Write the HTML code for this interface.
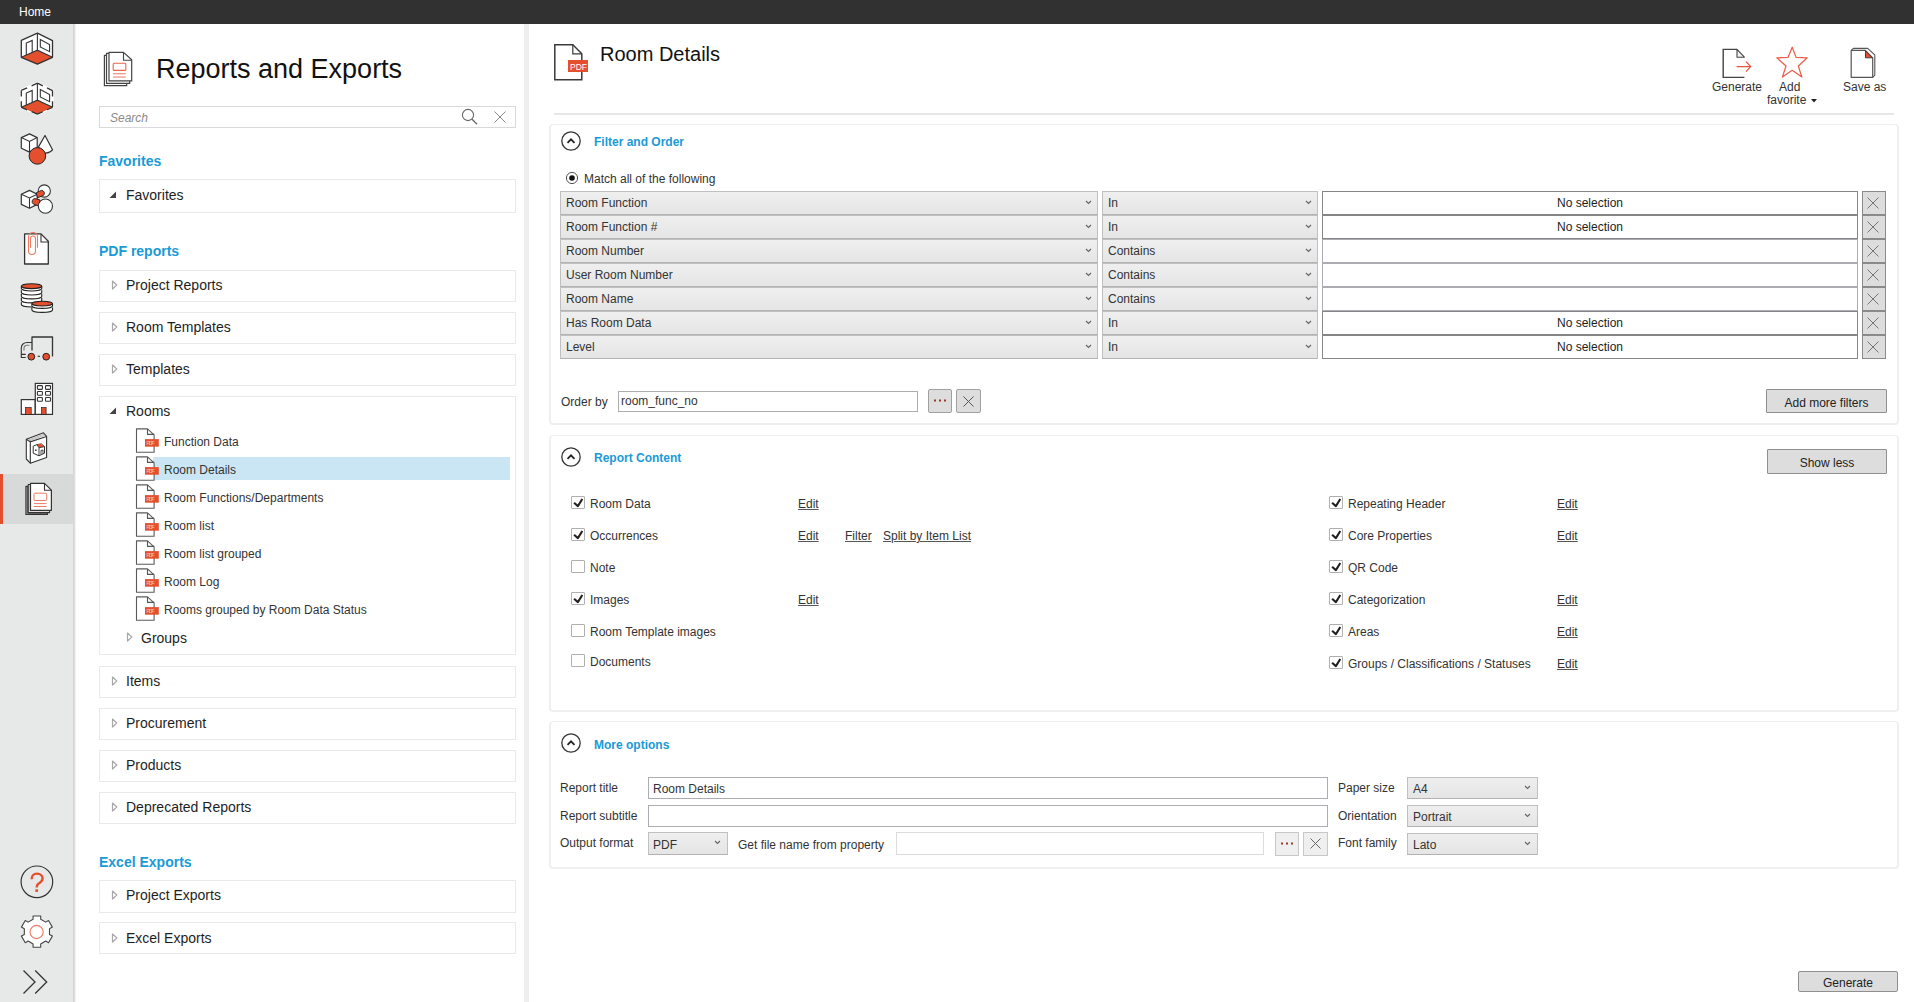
<!DOCTYPE html><html><head><meta charset="utf-8"><style>
*{box-sizing:border-box;margin:0;padding:0}
html,body{width:1914px;height:1002px;overflow:hidden;background:#fff;font-family:"Liberation Sans",sans-serif;color:#222}
.a{position:absolute}
.t{position:absolute;white-space:nowrap;line-height:1}
svg{position:absolute;overflow:visible}
.u{text-decoration:underline;text-underline-offset:1px;text-decoration-color:#555}
</style></head><body>
<div class="a" style="left:0px;top:0px;width:1914px;height:24px;background:#313131"></div>
<div class="t " style="left:19px;top:6px;font-size:12px;color:#fff">Home</div>
<div class="a" style="left:0px;top:24px;width:73px;height:978px;background:#e7e9e8"></div>
<div class="a" style="left:73px;top:24px;width:1px;height:978px;background:#d4d5d4"></div>
<div class="a" style="left:74px;top:24px;width:1px;height:978px;background:#dfe0df"></div>
<div class="a" style="left:75px;top:24px;width:1px;height:978px;background:#f0f1f0"></div>
<div class="a" style="left:0px;top:474px;width:73px;height:50px;background:#d8dada"></div>
<div class="a" style="left:0px;top:474px;width:3px;height:50px;background:#e4502d"></div>
<div class="a" style="left:524px;top:24px;width:5px;height:978px;background:#efefef"></div>
<svg style="left:98px;top:46px" width="40" height="46" viewBox="0 0 40 46">
<path d="M8.6 9.4 H6.4 V39.7 H28.7 V37.4" fill="#fff" stroke="#444" stroke-width="1.2" stroke-linejoin="round"/>
<path d="M11 7.4 H8.5 V37.4 H31.7 V34.9" fill="#fff" stroke="#444" stroke-width="1.2" stroke-linejoin="round"/>
<path d="M11 6.4 H25.5 L33.7 13.8 V34.9 H11 Z" fill="#fff" stroke="#444" stroke-width="1.2" stroke-linejoin="round"/>
<path d="M25.5 6.4 V14.2 H33.7" fill="none" stroke="#444" stroke-width="1.1"/>
<rect x="15.2" y="17.2" width="12.6" height="7.2" rx="1" fill="none" stroke="#e8654c" stroke-width="1.1"/>
<path d="M15.4 27.8 H27.4 M15.4 31 H27.4" stroke="#ea7a62" stroke-width="1.1" stroke-linecap="round"/>
</svg>
<div class="t " style="left:156px;top:56px;font-size:27px;color:#111">Reports and Exports</div>
<div class="a" style="left:99px;top:106px;width:417px;height:22px;border:1px solid #d9d9d9;background:#fff"></div>
<div class="t " style="left:110px;top:112px;font-size:12px;color:#8a8a8a;font-style:italic">Search</div>
<svg style="left:461px;top:109px" width="18" height="17" viewBox="0 0 18 17">
<circle cx="7" cy="6" r="5.6" fill="none" stroke="#666" stroke-width="1.1"/>
<path d="M10.8 10 L16 15.2" stroke="#666" stroke-width="1.3"/></svg>
<svg style="left:494px;top:111px" width="12" height="12" viewBox="0 0 12 12">
<path d="M0.5 0.5 L11.5 11.5 M11.5 0.5 L0.5 11.5" stroke="#888" stroke-width="1"/></svg>
<div class="t " style="left:99px;top:154px;font-size:14px;font-weight:bold;color:#1a9ad6">Favorites</div>
<div class="t " style="left:99px;top:244px;font-size:14px;font-weight:bold;color:#1a9ad6">PDF reports</div>
<div class="t " style="left:99px;top:855px;font-size:14px;font-weight:bold;color:#1a9ad6">Excel Exports</div>
<div class="a" style="left:99px;top:179px;width:417px;height:34px;border:1px solid #e9e9e9;background:#fff"></div>
<svg style="left:109px;top:191px" width="8" height="8" viewBox="0 0 8 8"><path d="M7 0.5 L7 7 L0.5 7 Z" fill="#444"/></svg>
<div class="t " style="left:126px;top:188px;font-size:14px;color:#1e1e1e">Favorites</div>
<div class="a" style="left:99px;top:270px;width:417px;height:32px;border:1px solid #e9e9e9;background:#fff"></div>
<svg style="left:111px;top:280px" width="7" height="10" viewBox="0 0 7 10"><path d="M1.5 1 L5.8 5 L1.5 9 Z" fill="#fff" stroke="#a8a8a8" stroke-width="1.2" stroke-linejoin="round"/></svg>
<div class="t " style="left:126px;top:278px;font-size:14px;color:#1e1e1e">Project Reports</div>
<div class="a" style="left:99px;top:312px;width:417px;height:32px;border:1px solid #e9e9e9;background:#fff"></div>
<svg style="left:111px;top:322px" width="7" height="10" viewBox="0 0 7 10"><path d="M1.5 1 L5.8 5 L1.5 9 Z" fill="#fff" stroke="#a8a8a8" stroke-width="1.2" stroke-linejoin="round"/></svg>
<div class="t " style="left:126px;top:320px;font-size:14px;color:#1e1e1e">Room Templates</div>
<div class="a" style="left:99px;top:354px;width:417px;height:32px;border:1px solid #e9e9e9;background:#fff"></div>
<svg style="left:111px;top:364px" width="7" height="10" viewBox="0 0 7 10"><path d="M1.5 1 L5.8 5 L1.5 9 Z" fill="#fff" stroke="#a8a8a8" stroke-width="1.2" stroke-linejoin="round"/></svg>
<div class="t " style="left:126px;top:362px;font-size:14px;color:#1e1e1e">Templates</div>
<div class="a" style="left:99px;top:396px;width:417px;height:259px;border:1px solid #e9e9e9;background:#fff"></div>
<svg style="left:109px;top:407px" width="8" height="8" viewBox="0 0 8 8"><path d="M7 0.5 L7 7 L0.5 7 Z" fill="#444"/></svg>
<div class="t " style="left:126px;top:404px;font-size:14px;color:#1e1e1e">Rooms</div>
<div class="a" style="left:99px;top:666px;width:417px;height:32px;border:1px solid #e9e9e9;background:#fff"></div>
<svg style="left:111px;top:676px" width="7" height="10" viewBox="0 0 7 10"><path d="M1.5 1 L5.8 5 L1.5 9 Z" fill="#fff" stroke="#a8a8a8" stroke-width="1.2" stroke-linejoin="round"/></svg>
<div class="t " style="left:126px;top:674px;font-size:14px;color:#1e1e1e">Items</div>
<div class="a" style="left:99px;top:708px;width:417px;height:32px;border:1px solid #e9e9e9;background:#fff"></div>
<svg style="left:111px;top:718px" width="7" height="10" viewBox="0 0 7 10"><path d="M1.5 1 L5.8 5 L1.5 9 Z" fill="#fff" stroke="#a8a8a8" stroke-width="1.2" stroke-linejoin="round"/></svg>
<div class="t " style="left:126px;top:716px;font-size:14px;color:#1e1e1e">Procurement</div>
<div class="a" style="left:99px;top:750px;width:417px;height:32px;border:1px solid #e9e9e9;background:#fff"></div>
<svg style="left:111px;top:760px" width="7" height="10" viewBox="0 0 7 10"><path d="M1.5 1 L5.8 5 L1.5 9 Z" fill="#fff" stroke="#a8a8a8" stroke-width="1.2" stroke-linejoin="round"/></svg>
<div class="t " style="left:126px;top:758px;font-size:14px;color:#1e1e1e">Products</div>
<div class="a" style="left:99px;top:792px;width:417px;height:32px;border:1px solid #e9e9e9;background:#fff"></div>
<svg style="left:111px;top:802px" width="7" height="10" viewBox="0 0 7 10"><path d="M1.5 1 L5.8 5 L1.5 9 Z" fill="#fff" stroke="#a8a8a8" stroke-width="1.2" stroke-linejoin="round"/></svg>
<div class="t " style="left:126px;top:800px;font-size:14px;color:#1e1e1e">Deprecated Reports</div>
<div class="a" style="left:99px;top:880px;width:417px;height:33px;border:1px solid #e9e9e9;background:#fff"></div>
<svg style="left:111px;top:890px" width="7" height="10" viewBox="0 0 7 10"><path d="M1.5 1 L5.8 5 L1.5 9 Z" fill="#fff" stroke="#a8a8a8" stroke-width="1.2" stroke-linejoin="round"/></svg>
<div class="t " style="left:126px;top:888px;font-size:14px;color:#1e1e1e">Project Exports</div>
<div class="a" style="left:99px;top:922px;width:417px;height:32px;border:1px solid #e9e9e9;background:#fff"></div>
<svg style="left:111px;top:933px" width="7" height="10" viewBox="0 0 7 10"><path d="M1.5 1 L5.8 5 L1.5 9 Z" fill="#fff" stroke="#a8a8a8" stroke-width="1.2" stroke-linejoin="round"/></svg>
<div class="t " style="left:126px;top:931px;font-size:14px;color:#1e1e1e">Excel Exports</div>
<div class="a" style="left:153px;top:457px;width:357px;height:23px;background:#cae6f4"></div>
<svg style="left:132px;top:425px" width="30" height="30" viewBox="0 0 30 30">
<path d="M4.5 3.9 H15.5 L22.1 9.9 V27.2 H4.5 Z" fill="#fff" stroke="#5a5a5a" stroke-width="1.1" stroke-linejoin="round"/>
<path d="M15.5 3.9 V9.4 H22.1" fill="none" stroke="#555" stroke-width="1.1"/>
<rect x="13" y="14.1" width="13.8" height="7.6" fill="#e4502d"/>
<text x="14.2" y="20.3" font-family="Liberation Sans" font-size="6.2" fill="#f7c0b0" textLength="8.5">PDF</text>
</svg>
<div class="t " style="left:164px;top:436px;font-size:12px;color:#333">Function Data</div>
<svg style="left:132px;top:453px" width="30" height="30" viewBox="0 0 30 30">
<path d="M4.5 3.9 H15.5 L22.1 9.9 V27.2 H4.5 Z" fill="#fff" stroke="#5a5a5a" stroke-width="1.1" stroke-linejoin="round"/>
<path d="M15.5 3.9 V9.4 H22.1" fill="none" stroke="#555" stroke-width="1.1"/>
<rect x="13" y="14.1" width="13.8" height="7.6" fill="#e4502d"/>
<text x="14.2" y="20.3" font-family="Liberation Sans" font-size="6.2" fill="#f7c0b0" textLength="8.5">PDF</text>
</svg>
<div class="t " style="left:164px;top:464px;font-size:12px;color:#333">Room Details</div>
<svg style="left:132px;top:481px" width="30" height="30" viewBox="0 0 30 30">
<path d="M4.5 3.9 H15.5 L22.1 9.9 V27.2 H4.5 Z" fill="#fff" stroke="#5a5a5a" stroke-width="1.1" stroke-linejoin="round"/>
<path d="M15.5 3.9 V9.4 H22.1" fill="none" stroke="#555" stroke-width="1.1"/>
<rect x="13" y="14.1" width="13.8" height="7.6" fill="#e4502d"/>
<text x="14.2" y="20.3" font-family="Liberation Sans" font-size="6.2" fill="#f7c0b0" textLength="8.5">PDF</text>
</svg>
<div class="t " style="left:164px;top:492px;font-size:12px;color:#333">Room Functions/Departments</div>
<svg style="left:132px;top:509px" width="30" height="30" viewBox="0 0 30 30">
<path d="M4.5 3.9 H15.5 L22.1 9.9 V27.2 H4.5 Z" fill="#fff" stroke="#5a5a5a" stroke-width="1.1" stroke-linejoin="round"/>
<path d="M15.5 3.9 V9.4 H22.1" fill="none" stroke="#555" stroke-width="1.1"/>
<rect x="13" y="14.1" width="13.8" height="7.6" fill="#e4502d"/>
<text x="14.2" y="20.3" font-family="Liberation Sans" font-size="6.2" fill="#f7c0b0" textLength="8.5">PDF</text>
</svg>
<div class="t " style="left:164px;top:520px;font-size:12px;color:#333">Room list</div>
<svg style="left:132px;top:537px" width="30" height="30" viewBox="0 0 30 30">
<path d="M4.5 3.9 H15.5 L22.1 9.9 V27.2 H4.5 Z" fill="#fff" stroke="#5a5a5a" stroke-width="1.1" stroke-linejoin="round"/>
<path d="M15.5 3.9 V9.4 H22.1" fill="none" stroke="#555" stroke-width="1.1"/>
<rect x="13" y="14.1" width="13.8" height="7.6" fill="#e4502d"/>
<text x="14.2" y="20.3" font-family="Liberation Sans" font-size="6.2" fill="#f7c0b0" textLength="8.5">PDF</text>
</svg>
<div class="t " style="left:164px;top:548px;font-size:12px;color:#333">Room list grouped</div>
<svg style="left:132px;top:565px" width="30" height="30" viewBox="0 0 30 30">
<path d="M4.5 3.9 H15.5 L22.1 9.9 V27.2 H4.5 Z" fill="#fff" stroke="#5a5a5a" stroke-width="1.1" stroke-linejoin="round"/>
<path d="M15.5 3.9 V9.4 H22.1" fill="none" stroke="#555" stroke-width="1.1"/>
<rect x="13" y="14.1" width="13.8" height="7.6" fill="#e4502d"/>
<text x="14.2" y="20.3" font-family="Liberation Sans" font-size="6.2" fill="#f7c0b0" textLength="8.5">PDF</text>
</svg>
<div class="t " style="left:164px;top:576px;font-size:12px;color:#333">Room Log</div>
<svg style="left:132px;top:593px" width="30" height="30" viewBox="0 0 30 30">
<path d="M4.5 3.9 H15.5 L22.1 9.9 V27.2 H4.5 Z" fill="#fff" stroke="#5a5a5a" stroke-width="1.1" stroke-linejoin="round"/>
<path d="M15.5 3.9 V9.4 H22.1" fill="none" stroke="#555" stroke-width="1.1"/>
<rect x="13" y="14.1" width="13.8" height="7.6" fill="#e4502d"/>
<text x="14.2" y="20.3" font-family="Liberation Sans" font-size="6.2" fill="#f7c0b0" textLength="8.5">PDF</text>
</svg>
<div class="t " style="left:164px;top:604px;font-size:12px;color:#333">Rooms grouped by Room Data Status</div>
<svg style="left:126px;top:632px" width="7" height="10" viewBox="0 0 7 10"><path d="M1.5 1 L5.8 5 L1.5 9 Z" fill="#fff" stroke="#a8a8a8" stroke-width="1.2" stroke-linejoin="round"/></svg>
<div class="t " style="left:141px;top:631px;font-size:14px;color:#1e1e1e">Groups</div>
<svg style="left:553px;top:43px" width="38" height="40" viewBox="0 0 38 40">
<path d="M1.8 1.8 h18 l9 9 v26 h-27 z" fill="#fff" stroke="#3a3a3a" stroke-width="1.5"/>
<path d="M19.8 1.8 v9 h9" fill="none" stroke="#3a3a3a" stroke-width="1.2"/>
<rect x="15" y="17" width="20" height="12" fill="#e4502d"/>
<text x="17" y="26.5" font-family="Liberation Sans" font-size="8.5" fill="#fff">PDF</text>
</svg>
<div class="t " style="left:600px;top:44px;font-size:20px;color:#111">Room Details</div>
<div class="a" style="left:554px;top:113px;width:1340px;height:2px;background:#e6e6e6"></div>
<svg style="left:1722px;top:48px" width="32" height="32" viewBox="0 0 32 32">
<path d="M15 1.4 L22.4 9.2 H15 Z" fill="#f2f2f2" stroke="#444" stroke-width="1.1" stroke-linejoin="round"/>
<path d="M22.4 29.4 H1.2 V1.4 H15" fill="none" stroke="#444" stroke-width="1.4"/>
<path d="M14.6 18.6 H28.5 M24 13.6 L28.7 18.6 L24 23.6" fill="none" stroke="#e8553e" stroke-width="1.2"/>
</svg>
<svg style="left:1770px;top:42px" width="44" height="40" viewBox="0 0 44 40">
<path d="M22.2 5.2 L26.1 15.4 L37.3 15.8 L28.3 24 L31.9 35.1 L22.2 28.3 L12.4 35.1 L16 24 L6.8 15.8 L18 15.4 Z" fill="none" stroke="#e8604a" stroke-width="1.25" stroke-linejoin="round"/>
</svg>
<svg style="left:1845px;top:42px" width="36" height="40" viewBox="0 0 36 40">
<path d="M6.2 8.4 L8.4 6.4 H22.6 L29.8 12.8 V33.2 L27.7 35.3" fill="#fff" stroke="#555" stroke-width="1.1" stroke-linejoin="round"/>
<path d="M6.2 8.4 H20.4 L27.7 15.8 V35.3 H6.2 Z" fill="#fff" stroke="#555" stroke-width="1.2" stroke-linejoin="round"/>
<path d="M20.5 8.8 V15.8 H27.3 Z" fill="#e4502d" stroke="#333" stroke-width="0.9" stroke-linejoin="round"/>
</svg>
<div class="t " style="left:1712px;top:81px;font-size:12px;color:#333">Generate</div>
<div class="t " style="left:1779px;top:81px;font-size:12px;color:#333">Add</div>
<div class="t " style="left:1767px;top:94px;font-size:12px;color:#333">favorite</div>
<svg style="left:1811px;top:99px" width="6" height="4" viewBox="0 0 6 4"><path d="M0 0 H6 L3 3.5 Z" fill="#222"/></svg>
<div class="t " style="left:1843px;top:81px;font-size:12px;color:#333">Save as</div>
<div class="a" style="left:549px;top:124px;width:1350px;height:301px;border:2px solid #eef0ef;border-top-width:1px;border-radius:4px;background:#fff"></div>
<svg style="left:559.5px;top:129.5px" width="22" height="22" viewBox="0 0 22 22">
<circle cx="11" cy="11" r="9.2" fill="none" stroke="#333" stroke-width="1.3"/>
<path d="M7.5 12.8 L11 9.3 L14.5 12.8" fill="none" stroke="#222" stroke-width="1.8"/></svg>
<div class="t " style="left:594px;top:136px;font-size:12px;font-weight:bold;color:#1a9ad6">Filter and Order</div>
<svg style="left:565px;top:171px" width="14" height="14" viewBox="0 0 14 14">
<circle cx="7" cy="7" r="5.6" fill="#fff" stroke="#555" stroke-width="1"/><circle cx="7" cy="7" r="2.8" fill="#111"/></svg>
<div class="t " style="left:584px;top:173px;font-size:12px;color:#333">Match all of the following</div>
<div class="a" style="left:560px;top:191px;width:538px;height:24px;border:1px solid #c0c0c0;border-bottom-color:#b3b3b3;background:linear-gradient(#efefef,#e5e5e5)"></div>
<div class="t " style="left:566px;top:197px;font-size:12px;color:#333">Room Function</div>
<svg style="left:1085px;top:200px" width="7" height="5" viewBox="0 0 7 5"><path d="M1 1 L3.5 3.5 L6 1" fill="none" stroke="#666" stroke-width="1.15"/></svg>
<div class="a" style="left:1102px;top:191px;width:216px;height:24px;border:1px solid #c0c0c0;border-bottom-color:#b3b3b3;background:linear-gradient(#efefef,#e5e5e5)"></div>
<div class="t " style="left:1108px;top:197px;font-size:12px;color:#333">In</div>
<svg style="left:1305px;top:200px" width="7" height="5" viewBox="0 0 7 5"><path d="M1 1 L3.5 3.5 L6 1" fill="none" stroke="#666" stroke-width="1.15"/></svg>
<div class="a" style="left:1322px;top:191px;width:536px;height:24px;border:1px solid #858585;background:#fff"></div>
<div class="t" style="left:1322px;width:536px;text-align:center;top:197px;font-size:12px;color:#222">No selection</div>
<div class="a" style="left:1862px;top:191px;width:24px;height:24px;border:1px solid #8a8a8a;background:#dddddd"></div>
<svg style="left:1867px;top:197px" width="12" height="12" viewBox="0 0 12 12"><path d="M0.5 0.5 L11.5 11.5 M11.5 0.5 L0.5 11.5" stroke="#777" stroke-width="1.0"/></svg>
<div class="a" style="left:560px;top:215px;width:538px;height:24px;border:1px solid #c0c0c0;border-bottom-color:#b3b3b3;background:linear-gradient(#efefef,#e5e5e5)"></div>
<div class="t " style="left:566px;top:221px;font-size:12px;color:#333">Room Function #</div>
<svg style="left:1085px;top:224px" width="7" height="5" viewBox="0 0 7 5"><path d="M1 1 L3.5 3.5 L6 1" fill="none" stroke="#666" stroke-width="1.15"/></svg>
<div class="a" style="left:1102px;top:215px;width:216px;height:24px;border:1px solid #c0c0c0;border-bottom-color:#b3b3b3;background:linear-gradient(#efefef,#e5e5e5)"></div>
<div class="t " style="left:1108px;top:221px;font-size:12px;color:#333">In</div>
<svg style="left:1305px;top:224px" width="7" height="5" viewBox="0 0 7 5"><path d="M1 1 L3.5 3.5 L6 1" fill="none" stroke="#666" stroke-width="1.15"/></svg>
<div class="a" style="left:1322px;top:215px;width:536px;height:24px;border:1px solid #858585;background:#fff"></div>
<div class="t" style="left:1322px;width:536px;text-align:center;top:221px;font-size:12px;color:#222">No selection</div>
<div class="a" style="left:1862px;top:215px;width:24px;height:24px;border:1px solid #8a8a8a;background:#dddddd"></div>
<svg style="left:1867px;top:221px" width="12" height="12" viewBox="0 0 12 12"><path d="M0.5 0.5 L11.5 11.5 M11.5 0.5 L0.5 11.5" stroke="#777" stroke-width="1.0"/></svg>
<div class="a" style="left:560px;top:239px;width:538px;height:24px;border:1px solid #c0c0c0;border-bottom-color:#b3b3b3;background:linear-gradient(#efefef,#e5e5e5)"></div>
<div class="t " style="left:566px;top:245px;font-size:12px;color:#333">Room Number</div>
<svg style="left:1085px;top:248px" width="7" height="5" viewBox="0 0 7 5"><path d="M1 1 L3.5 3.5 L6 1" fill="none" stroke="#666" stroke-width="1.15"/></svg>
<div class="a" style="left:1102px;top:239px;width:216px;height:24px;border:1px solid #c0c0c0;border-bottom-color:#b3b3b3;background:linear-gradient(#efefef,#e5e5e5)"></div>
<div class="t " style="left:1108px;top:245px;font-size:12px;color:#333">Contains</div>
<svg style="left:1305px;top:248px" width="7" height="5" viewBox="0 0 7 5"><path d="M1 1 L3.5 3.5 L6 1" fill="none" stroke="#666" stroke-width="1.15"/></svg>
<div class="a" style="left:1322px;top:239px;width:536px;height:24px;border:1px solid #abadb3;background:#fff"></div>
<div class="a" style="left:1862px;top:239px;width:24px;height:24px;border:1px solid #8a8a8a;background:#dddddd"></div>
<svg style="left:1867px;top:245px" width="12" height="12" viewBox="0 0 12 12"><path d="M0.5 0.5 L11.5 11.5 M11.5 0.5 L0.5 11.5" stroke="#777" stroke-width="1.0"/></svg>
<div class="a" style="left:560px;top:263px;width:538px;height:24px;border:1px solid #c0c0c0;border-bottom-color:#b3b3b3;background:linear-gradient(#efefef,#e5e5e5)"></div>
<div class="t " style="left:566px;top:269px;font-size:12px;color:#333">User Room Number</div>
<svg style="left:1085px;top:272px" width="7" height="5" viewBox="0 0 7 5"><path d="M1 1 L3.5 3.5 L6 1" fill="none" stroke="#666" stroke-width="1.15"/></svg>
<div class="a" style="left:1102px;top:263px;width:216px;height:24px;border:1px solid #c0c0c0;border-bottom-color:#b3b3b3;background:linear-gradient(#efefef,#e5e5e5)"></div>
<div class="t " style="left:1108px;top:269px;font-size:12px;color:#333">Contains</div>
<svg style="left:1305px;top:272px" width="7" height="5" viewBox="0 0 7 5"><path d="M1 1 L3.5 3.5 L6 1" fill="none" stroke="#666" stroke-width="1.15"/></svg>
<div class="a" style="left:1322px;top:263px;width:536px;height:24px;border:1px solid #abadb3;background:#fff"></div>
<div class="a" style="left:1862px;top:263px;width:24px;height:24px;border:1px solid #8a8a8a;background:#dddddd"></div>
<svg style="left:1867px;top:269px" width="12" height="12" viewBox="0 0 12 12"><path d="M0.5 0.5 L11.5 11.5 M11.5 0.5 L0.5 11.5" stroke="#777" stroke-width="1.0"/></svg>
<div class="a" style="left:560px;top:287px;width:538px;height:24px;border:1px solid #c0c0c0;border-bottom-color:#b3b3b3;background:linear-gradient(#efefef,#e5e5e5)"></div>
<div class="t " style="left:566px;top:293px;font-size:12px;color:#333">Room Name</div>
<svg style="left:1085px;top:296px" width="7" height="5" viewBox="0 0 7 5"><path d="M1 1 L3.5 3.5 L6 1" fill="none" stroke="#666" stroke-width="1.15"/></svg>
<div class="a" style="left:1102px;top:287px;width:216px;height:24px;border:1px solid #c0c0c0;border-bottom-color:#b3b3b3;background:linear-gradient(#efefef,#e5e5e5)"></div>
<div class="t " style="left:1108px;top:293px;font-size:12px;color:#333">Contains</div>
<svg style="left:1305px;top:296px" width="7" height="5" viewBox="0 0 7 5"><path d="M1 1 L3.5 3.5 L6 1" fill="none" stroke="#666" stroke-width="1.15"/></svg>
<div class="a" style="left:1322px;top:287px;width:536px;height:24px;border:1px solid #abadb3;background:#fff"></div>
<div class="a" style="left:1862px;top:287px;width:24px;height:24px;border:1px solid #8a8a8a;background:#dddddd"></div>
<svg style="left:1867px;top:293px" width="12" height="12" viewBox="0 0 12 12"><path d="M0.5 0.5 L11.5 11.5 M11.5 0.5 L0.5 11.5" stroke="#777" stroke-width="1.0"/></svg>
<div class="a" style="left:560px;top:311px;width:538px;height:24px;border:1px solid #c0c0c0;border-bottom-color:#b3b3b3;background:linear-gradient(#efefef,#e5e5e5)"></div>
<div class="t " style="left:566px;top:317px;font-size:12px;color:#333">Has Room Data</div>
<svg style="left:1085px;top:320px" width="7" height="5" viewBox="0 0 7 5"><path d="M1 1 L3.5 3.5 L6 1" fill="none" stroke="#666" stroke-width="1.15"/></svg>
<div class="a" style="left:1102px;top:311px;width:216px;height:24px;border:1px solid #c0c0c0;border-bottom-color:#b3b3b3;background:linear-gradient(#efefef,#e5e5e5)"></div>
<div class="t " style="left:1108px;top:317px;font-size:12px;color:#333">In</div>
<svg style="left:1305px;top:320px" width="7" height="5" viewBox="0 0 7 5"><path d="M1 1 L3.5 3.5 L6 1" fill="none" stroke="#666" stroke-width="1.15"/></svg>
<div class="a" style="left:1322px;top:311px;width:536px;height:24px;border:1px solid #858585;background:#fff"></div>
<div class="t" style="left:1322px;width:536px;text-align:center;top:317px;font-size:12px;color:#222">No selection</div>
<div class="a" style="left:1862px;top:311px;width:24px;height:24px;border:1px solid #8a8a8a;background:#dddddd"></div>
<svg style="left:1867px;top:317px" width="12" height="12" viewBox="0 0 12 12"><path d="M0.5 0.5 L11.5 11.5 M11.5 0.5 L0.5 11.5" stroke="#777" stroke-width="1.0"/></svg>
<div class="a" style="left:560px;top:335px;width:538px;height:24px;border:1px solid #c0c0c0;border-bottom-color:#b3b3b3;background:linear-gradient(#efefef,#e5e5e5)"></div>
<div class="t " style="left:566px;top:341px;font-size:12px;color:#333">Level</div>
<svg style="left:1085px;top:344px" width="7" height="5" viewBox="0 0 7 5"><path d="M1 1 L3.5 3.5 L6 1" fill="none" stroke="#666" stroke-width="1.15"/></svg>
<div class="a" style="left:1102px;top:335px;width:216px;height:24px;border:1px solid #c0c0c0;border-bottom-color:#b3b3b3;background:linear-gradient(#efefef,#e5e5e5)"></div>
<div class="t " style="left:1108px;top:341px;font-size:12px;color:#333">In</div>
<svg style="left:1305px;top:344px" width="7" height="5" viewBox="0 0 7 5"><path d="M1 1 L3.5 3.5 L6 1" fill="none" stroke="#666" stroke-width="1.15"/></svg>
<div class="a" style="left:1322px;top:335px;width:536px;height:24px;border:1px solid #858585;background:#fff"></div>
<div class="t" style="left:1322px;width:536px;text-align:center;top:341px;font-size:12px;color:#222">No selection</div>
<div class="a" style="left:1862px;top:335px;width:24px;height:24px;border:1px solid #8a8a8a;background:#dddddd"></div>
<svg style="left:1867px;top:341px" width="12" height="12" viewBox="0 0 12 12"><path d="M0.5 0.5 L11.5 11.5 M11.5 0.5 L0.5 11.5" stroke="#777" stroke-width="1.0"/></svg>
<div class="t " style="left:561px;top:396px;font-size:12px;color:#333">Order by</div>
<div class="a" style="left:618px;top:391px;width:300px;height:21px;border:1px solid #abadb3;background:#fff"></div>
<div class="t " style="left:621px;top:395px;font-size:12px;color:#333">room_func_no</div>
<div class="a" style="left:928px;top:389px;width:24px;height:24px;border:1px solid #a0a0a0;border-radius:2px;background:#dddddd"></div>
<svg style="left:932px;top:399px" width="16" height="4" viewBox="0 0 16 4"><rect x="2" y="0.5" width="2" height="2" fill="#9a3b28"/><rect x="7" y="0.5" width="2" height="2" fill="#9a3b28"/><rect x="12" y="0.5" width="2" height="2" fill="#9a3b28"/></svg>
<div class="a" style="left:956px;top:389px;width:25px;height:24px;border:1px solid #a0a0a0;border-radius:2px;background:#dddddd"></div>
<svg style="left:963px;top:396px" width="11" height="11" viewBox="0 0 11 11"><path d="M0.5 0.5 L10.5 10.5 M10.5 0.5 L0.5 10.5" stroke="#555" stroke-width="1.0"/></svg>
<div class="a" style="left:1766px;top:389px;width:121px;height:24px;border:1px solid #8f8f8f;border-radius:1px;background:#dddddd"></div>
<div class="t" style="left:1766px;width:121px;text-align:center;top:397px;font-size:12px;color:#222">Add more filters</div>
<div class="a" style="left:549px;top:435px;width:1350px;height:277px;border:2px solid #eef0ef;border-top-width:1px;border-radius:4px;background:#fff"></div>
<svg style="left:559.5px;top:445.5px" width="22" height="22" viewBox="0 0 22 22">
<circle cx="11" cy="11" r="9.2" fill="none" stroke="#333" stroke-width="1.3"/>
<path d="M7.5 12.8 L11 9.3 L14.5 12.8" fill="none" stroke="#222" stroke-width="1.8"/></svg>
<div class="t " style="left:594px;top:452px;font-size:12px;font-weight:bold;color:#1a9ad6">Report Content</div>
<div class="a" style="left:1767px;top:449px;width:120px;height:25px;border:1px solid #8f8f8f;border-radius:1px;background:#dddddd"></div>
<div class="t" style="left:1767px;width:120px;text-align:center;top:457px;font-size:12px;color:#222">Show less</div>
<div class="a" style="left:571px;top:496px;width:14px;height:13px;border:1px solid #b0b0b0;border-radius:1px;background:#fff"></div>
<svg style="left:571px;top:496px" width="14" height="14" viewBox="0 0 14 14"><path d="M3.1 6.8 L6.9 10.1 L11.3 3" fill="none" stroke="#222" stroke-width="2.1" stroke-linejoin="round"/></svg>
<div class="t " style="left:590px;top:498px;font-size:12px;color:#333">Room Data</div>
<div class="t u" style="left:798px;top:498px;font-size:12px;color:#333">Edit</div>
<div class="a" style="left:571px;top:528px;width:14px;height:13px;border:1px solid #b0b0b0;border-radius:1px;background:#fff"></div>
<svg style="left:571px;top:528px" width="14" height="14" viewBox="0 0 14 14"><path d="M3.1 6.8 L6.9 10.1 L11.3 3" fill="none" stroke="#222" stroke-width="2.1" stroke-linejoin="round"/></svg>
<div class="t " style="left:590px;top:530px;font-size:12px;color:#333">Occurrences</div>
<div class="t u" style="left:798px;top:530px;font-size:12px;color:#333">Edit</div>
<div class="t u" style="left:845px;top:530px;font-size:12px;color:#333">Filter</div>
<div class="t u" style="left:883px;top:530px;font-size:12px;color:#333">Split by Item List</div>
<div class="a" style="left:571px;top:560px;width:14px;height:13px;border:1px solid #b0b0b0;border-radius:1px;background:#fff"></div>
<div class="t " style="left:590px;top:562px;font-size:12px;color:#333">Note</div>
<div class="a" style="left:571px;top:592px;width:14px;height:13px;border:1px solid #b0b0b0;border-radius:1px;background:#fff"></div>
<svg style="left:571px;top:592px" width="14" height="14" viewBox="0 0 14 14"><path d="M3.1 6.8 L6.9 10.1 L11.3 3" fill="none" stroke="#222" stroke-width="2.1" stroke-linejoin="round"/></svg>
<div class="t " style="left:590px;top:594px;font-size:12px;color:#333">Images</div>
<div class="t u" style="left:798px;top:594px;font-size:12px;color:#333">Edit</div>
<div class="a" style="left:571px;top:624px;width:14px;height:13px;border:1px solid #b0b0b0;border-radius:1px;background:#fff"></div>
<div class="t " style="left:590px;top:626px;font-size:12px;color:#333">Room Template images</div>
<div class="a" style="left:571px;top:654px;width:14px;height:13px;border:1px solid #b0b0b0;border-radius:1px;background:#fff"></div>
<div class="t " style="left:590px;top:656px;font-size:12px;color:#333">Documents</div>
<div class="a" style="left:1329px;top:496px;width:14px;height:13px;border:1px solid #b0b0b0;border-radius:1px;background:#fff"></div>
<svg style="left:1329px;top:496px" width="14" height="14" viewBox="0 0 14 14"><path d="M3.1 6.8 L6.9 10.1 L11.3 3" fill="none" stroke="#222" stroke-width="2.1" stroke-linejoin="round"/></svg>
<div class="t " style="left:1348px;top:498px;font-size:12px;color:#333">Repeating Header</div>
<div class="t u" style="left:1557px;top:498px;font-size:12px;color:#333">Edit</div>
<div class="a" style="left:1329px;top:528px;width:14px;height:13px;border:1px solid #b0b0b0;border-radius:1px;background:#fff"></div>
<svg style="left:1329px;top:528px" width="14" height="14" viewBox="0 0 14 14"><path d="M3.1 6.8 L6.9 10.1 L11.3 3" fill="none" stroke="#222" stroke-width="2.1" stroke-linejoin="round"/></svg>
<div class="t " style="left:1348px;top:530px;font-size:12px;color:#333">Core Properties</div>
<div class="t u" style="left:1557px;top:530px;font-size:12px;color:#333">Edit</div>
<div class="a" style="left:1329px;top:560px;width:14px;height:13px;border:1px solid #b0b0b0;border-radius:1px;background:#fff"></div>
<svg style="left:1329px;top:560px" width="14" height="14" viewBox="0 0 14 14"><path d="M3.1 6.8 L6.9 10.1 L11.3 3" fill="none" stroke="#222" stroke-width="2.1" stroke-linejoin="round"/></svg>
<div class="t " style="left:1348px;top:562px;font-size:12px;color:#333">QR Code</div>
<div class="a" style="left:1329px;top:592px;width:14px;height:13px;border:1px solid #b0b0b0;border-radius:1px;background:#fff"></div>
<svg style="left:1329px;top:592px" width="14" height="14" viewBox="0 0 14 14"><path d="M3.1 6.8 L6.9 10.1 L11.3 3" fill="none" stroke="#222" stroke-width="2.1" stroke-linejoin="round"/></svg>
<div class="t " style="left:1348px;top:594px;font-size:12px;color:#333">Categorization</div>
<div class="t u" style="left:1557px;top:594px;font-size:12px;color:#333">Edit</div>
<div class="a" style="left:1329px;top:624px;width:14px;height:13px;border:1px solid #b0b0b0;border-radius:1px;background:#fff"></div>
<svg style="left:1329px;top:624px" width="14" height="14" viewBox="0 0 14 14"><path d="M3.1 6.8 L6.9 10.1 L11.3 3" fill="none" stroke="#222" stroke-width="2.1" stroke-linejoin="round"/></svg>
<div class="t " style="left:1348px;top:626px;font-size:12px;color:#333">Areas</div>
<div class="t u" style="left:1557px;top:626px;font-size:12px;color:#333">Edit</div>
<div class="a" style="left:1329px;top:656px;width:14px;height:13px;border:1px solid #b0b0b0;border-radius:1px;background:#fff"></div>
<svg style="left:1329px;top:656px" width="14" height="14" viewBox="0 0 14 14"><path d="M3.1 6.8 L6.9 10.1 L11.3 3" fill="none" stroke="#222" stroke-width="2.1" stroke-linejoin="round"/></svg>
<div class="t " style="left:1348px;top:658px;font-size:12px;color:#333">Groups / Classifications / Statuses</div>
<div class="t u" style="left:1557px;top:658px;font-size:12px;color:#333">Edit</div>
<div class="a" style="left:549px;top:721px;width:1350px;height:148px;border:2px solid #eef0ef;border-top-width:1px;border-radius:4px;background:#fff"></div>
<svg style="left:559.5px;top:732px" width="22" height="22" viewBox="0 0 22 22">
<circle cx="11" cy="11" r="9.2" fill="none" stroke="#333" stroke-width="1.3"/>
<path d="M7.5 12.8 L11 9.3 L14.5 12.8" fill="none" stroke="#222" stroke-width="1.8"/></svg>
<div class="t " style="left:594px;top:739px;font-size:12px;font-weight:bold;color:#1a9ad6">More options</div>
<div class="t " style="left:560px;top:782px;font-size:12px;color:#333">Report title</div>
<div class="t " style="left:560px;top:810px;font-size:12px;color:#333">Report subtitle</div>
<div class="t " style="left:560px;top:837px;font-size:12px;color:#333">Output format</div>
<div class="a" style="left:648px;top:777px;width:680px;height:22px;border:1px solid #abadb3;background:#fff"></div>
<div class="t " style="left:653px;top:783px;font-size:12px;color:#333">Room Details</div>
<div class="a" style="left:648px;top:805px;width:680px;height:22px;border:1px solid #abadb3;background:#fff"></div>
<div class="a" style="left:648px;top:832px;width:80px;height:23px;border:1px solid #c0c0c0;border-bottom-color:#b3b3b3;background:linear-gradient(#efefef,#e5e5e5)"></div>
<div class="t " style="left:653px;top:839px;font-size:12px;color:#333">PDF</div>
<svg style="left:714px;top:840px" width="7" height="5" viewBox="0 0 7 5"><path d="M1 1 L3.5 3.5 L6 1" fill="none" stroke="#666" stroke-width="1.15"/></svg>
<div class="t " style="left:738px;top:839px;font-size:12px;color:#333">Get file name from property</div>
<div class="a" style="left:896px;top:832px;width:368px;height:23px;border:1px solid #dcdcdc;background:#fff"></div>
<div class="a" style="left:1275px;top:832px;width:24px;height:24px;border:1px solid #c8c8c8;background:#efefef"></div>
<svg style="left:1279px;top:842px" width="16" height="4" viewBox="0 0 16 4"><rect x="2" y="0.5" width="2" height="2" fill="#9a3b28"/><rect x="7" y="0.5" width="2" height="2" fill="#9a3b28"/><rect x="12" y="0.5" width="2" height="2" fill="#9a3b28"/></svg>
<div class="a" style="left:1303px;top:832px;width:25px;height:24px;border:1px solid #c8c8c8;background:#efefef"></div>
<svg style="left:1310px;top:838px" width="11" height="11" viewBox="0 0 11 11"><path d="M0.5 0.5 L10.5 10.5 M10.5 0.5 L0.5 10.5" stroke="#666" stroke-width="1.0"/></svg>
<div class="t " style="left:1338px;top:782px;font-size:12px;color:#333">Paper size</div>
<div class="t " style="left:1338px;top:810px;font-size:12px;color:#333">Orientation</div>
<div class="t " style="left:1338px;top:837px;font-size:12px;color:#333">Font family</div>
<div class="a" style="left:1407px;top:777px;width:131px;height:22px;border:1px solid #c0c0c0;border-bottom-color:#b3b3b3;background:linear-gradient(#efefef,#e5e5e5)"></div>
<div class="t " style="left:1413px;top:783px;font-size:12px;color:#333">A4</div>
<svg style="left:1524px;top:785px" width="7" height="5" viewBox="0 0 7 5"><path d="M1 1 L3.5 3.5 L6 1" fill="none" stroke="#666" stroke-width="1.15"/></svg>
<div class="a" style="left:1407px;top:805px;width:131px;height:22px;border:1px solid #c0c0c0;border-bottom-color:#b3b3b3;background:linear-gradient(#efefef,#e5e5e5)"></div>
<div class="t " style="left:1413px;top:811px;font-size:12px;color:#333">Portrait</div>
<svg style="left:1524px;top:813px" width="7" height="5" viewBox="0 0 7 5"><path d="M1 1 L3.5 3.5 L6 1" fill="none" stroke="#666" stroke-width="1.15"/></svg>
<div class="a" style="left:1407px;top:833px;width:131px;height:22px;border:1px solid #c0c0c0;border-bottom-color:#b3b3b3;background:linear-gradient(#efefef,#e5e5e5)"></div>
<div class="t " style="left:1413px;top:839px;font-size:12px;color:#333">Lato</div>
<svg style="left:1524px;top:841px" width="7" height="5" viewBox="0 0 7 5"><path d="M1 1 L3.5 3.5 L6 1" fill="none" stroke="#666" stroke-width="1.15"/></svg>
<div class="a" style="left:1798px;top:971px;width:100px;height:21px;border:1px solid #8f8f8f;border-radius:2px;background:#dddddd"></div>
<div class="t" style="left:1798px;width:100px;text-align:center;top:977px;font-size:12px;color:#222">Generate</div>
<svg style="left:15px;top:28px" width="45" height="42" viewBox="0 0 45 42">
<path d="M6.3 12.4 L22.4 5.2 L37.5 12.6 L37.5 29.3 L22.4 36.2 L6.3 29.3 Z" fill="#fff"/>
<path d="M6.3 29.3 L22.4 22.2 L37.5 29.3 L22.4 36.2 Z" fill="#e4502d"/>
<path d="M11.3 27.1 V15 L17.2 12.4 V24.5" fill="none" stroke="#333" stroke-width="1.1"/>
<path d="M25.3 11.5 L34.6 16.5 V23.7 L25.3 18.9 Z" fill="none" stroke="#333" stroke-width="1.1"/>
<path d="M22.4 5.2 V22.2 M6.3 29.3 L22.4 22.2 L37.5 29.3" fill="none" stroke="#333" stroke-width="1.1"/>
<path d="M6.3 12.4 L22.4 5.2 L37.5 12.6 L37.5 29.3 L22.4 36.2 L6.3 29.3 Z" fill="none" stroke="#333" stroke-width="1.3" stroke-linejoin="round"/></svg>
<svg style="left:15px;top:78px" width="45" height="42" viewBox="0 0 45 42"><path d="M6.3 12.4 L22.4 5.2 L37.5 12.6 L37.5 29.3 L22.4 36.2 L6.3 29.3 Z" fill="#fff" stroke="#fff" stroke-width="2.5"/>
<path d="M6.3 12.4 L22.4 5.2 L37.5 12.6 L37.5 29.3 L22.4 36.2 L6.3 29.3 Z" fill="#fff"/>
<path d="M6.3 29.3 L22.4 22.2 L37.5 29.3 L22.4 36.2 Z" fill="#e4502d"/>
<path d="M11.3 27.1 V15 L17.2 12.4 V24.5" fill="none" stroke="#333" stroke-width="1.1"/>
<path d="M25.3 11.5 L34.6 16.5 V23.7 L25.3 18.9 Z" fill="none" stroke="#333" stroke-width="1.1"/>
<path d="M22.4 5.2 V22.2 M6.3 29.3 L22.4 22.2 L37.5 29.3" fill="none" stroke="#333" stroke-width="1.1"/>
<path d="M6.3 12.4 L12.10 9.81 M22.4 5.2 L16.60 7.79 M22.4 5.2 L27.84 7.86 M37.5 12.6 L32.06 9.94 M37.5 12.6 L37.50 18.61 M37.5 29.3 L37.50 23.29 M37.5 29.3 L32.06 31.78 M22.4 36.2 L27.84 33.72 M22.4 36.2 L16.60 33.72 M6.3 29.3 L12.10 31.78 M6.3 29.3 L6.30 23.22 M6.3 12.4 L6.30 18.48 " fill="none" stroke="#333" stroke-width="1.3" stroke-linecap="butt"/></svg>
<svg style="left:15px;top:128px" width="45" height="42" viewBox="0 0 45 42">
<path d="M14.5 5.9 L22.2 9.6 V19.7 L14.5 24.1 L6.3 20.3 V9.6 Z" fill="#fff" stroke="#333" stroke-width="1.2" stroke-linejoin="round"/>
<path d="M6.3 9.6 L14.5 13.4 L22.2 9.6 M14.5 13.4 V24.1" fill="none" stroke="#333" stroke-width="1.1"/>
<path d="M30 7.5 L23.5 18.9 Q28 26 31.2 25.1 Q36 24 37.5 21.8 Z" fill="#fff" stroke="#333" stroke-width="1.2" stroke-linejoin="round"/>
<circle cx="22.4" cy="27.9" r="8.3" fill="#e4502d" stroke="#222" stroke-width="1"/>
</svg>
<svg style="left:15px;top:178px" width="45" height="42" viewBox="0 0 45 42">
<path d="M14.5 12.4 L22.2 16.3 V26.4 L14.5 30.2 L6.3 26.4 V16.3 Z" fill="#fff" stroke="#333" stroke-width="1.2" stroke-linejoin="round"/>
<path d="M6.3 16.3 L14.5 19.9 L22.2 16.3 M14.5 19.9 V30.2" fill="none" stroke="#333" stroke-width="1.1"/>
<circle cx="29.3" cy="13" r="6.1" fill="#fff" stroke="#333" stroke-width="1.1"/>
<path d="M21.2 14.8 L26.3 12.4 A2.9 2.9 0 0 1 28.6 17.3 L22.6 19.8 Z" fill="#e4502d" stroke="#222" stroke-width="0.9" stroke-linejoin="round"/>
<path d="M24.8 21.8 L19.8 20.5 A3.1 3.1 0 0 0 18.3 26 L24.3 28.2 Z" fill="#e4502d" stroke="#222" stroke-width="0.9" stroke-linejoin="round"/>
<circle cx="30.4" cy="28.1" r="7.1" fill="#fff" stroke="#333" stroke-width="1.1"/>
</svg>
<svg style="left:15px;top:228px" width="45" height="42" viewBox="0 0 45 42">
<path d="M9.6 5.9 H26 L33.3 13.2 V36 H9.6 Z" fill="#fff" stroke="#333" stroke-width="1.3" stroke-linejoin="round"/>
<path d="M26 5.9 V14 H33.3" fill="none" stroke="#333" stroke-width="1.1"/>
<path d="M15.5 19.7 V10.5 A2.5 2.5 0 0 1 20.5 10.5 V23 A3.5 3.5 0 0 1 13.5 23 V9 A4.5 4.5 0 0 1 22.5 9 V19.7" fill="none" stroke="#ea7a62" stroke-width="1.1"/>
</svg>
<svg style="left:15px;top:278px" width="45" height="42" viewBox="0 0 45 42"><path d="M6.350000000000001 24.2 V26.599999999999998 A10.2 2.4 0 0 0 26.75 26.599999999999998 V24.2" fill="#fff" stroke="#222" stroke-width="1.1"/><path d="M6.350000000000001 20.1 V22.5 A10.2 2.4 0 0 0 26.75 22.5 V20.1" fill="#fff" stroke="#222" stroke-width="1.1"/><path d="M6.350000000000001 16.1 V18.5 A10.2 2.4 0 0 0 26.75 18.5 V16.1" fill="#fff" stroke="#222" stroke-width="1.1"/><path d="M6.350000000000001 12.2 V14.6 A10.2 2.4 0 0 0 26.75 14.6 V12.2" fill="#fff" stroke="#222" stroke-width="1.1"/><path d="M6.350000000000001 8.2 V10.6 A10.2 2.4 0 0 0 26.75 10.6 V8.2" fill="#fff" stroke="#222" stroke-width="1.1"/><ellipse cx="16.55" cy="8.2" rx="10.2" ry="2.4" fill="#e4502d" stroke="#222" stroke-width="1.1"/><path d="M16.9 29.6 V32.0 A10.3 2.4 0 0 0 37.5 32.0 V29.6" fill="#fff" stroke="#222" stroke-width="1.1"/><path d="M16.9 25.6 V28.0 A10.3 2.4 0 0 0 37.5 28.0 V25.6" fill="#fff" stroke="#222" stroke-width="1.1"/><ellipse cx="27.2" cy="25.6" rx="10.3" ry="2.4" fill="#e4502d" stroke="#222" stroke-width="1.1"/></svg>
<svg style="left:15px;top:328px" width="45" height="42" viewBox="0 0 45 42">
<path d="M17 22.6 V9 H37.5 V28.5" fill="none" stroke="#333" stroke-width="1.3" stroke-linejoin="round"/>
<path d="M17 14.5 H12.1 A5.8 5.2 0 0 0 6.3 19.7 V29.5 H10.7 M6.3 26.4 H10.7" fill="none" stroke="#333" stroke-width="1.1"/>
<path d="M9 22.6 V20 A3 2.8 0 0 1 12.1 17.2 H14.5" fill="none" stroke="#777" stroke-width="1.1"/>
<circle cx="16.3" cy="28.7" r="3.4" fill="#e4502d" stroke="#222" stroke-width="1"/>
<circle cx="31.2" cy="28.7" r="3.4" fill="#e4502d" stroke="#222" stroke-width="1"/>
<path d="M22.6 28.3 H25.1" stroke="#333" stroke-width="1.1"/>
</svg>
<svg style="left:15px;top:378px" width="45" height="42" viewBox="0 0 45 42">
<rect x="6.3" y="21.6" width="13.9" height="14.8" fill="#fff" stroke="#333" stroke-width="1.2"/>
<rect x="20.3" y="5.4" width="17.2" height="31" fill="#fff" stroke="#333" stroke-width="1.2"/>
<rect x="22.4" y="7.6" width="5" height="3.8" rx="0.8" fill="none" stroke="#333" stroke-width="1.1"/><rect x="22.4" y="13.5" width="5" height="3.8" rx="0.8" fill="none" stroke="#333" stroke-width="1.1"/><rect x="22.4" y="19.5" width="5" height="3.8" rx="0.8" fill="none" stroke="#333" stroke-width="1.1"/><rect x="30.5" y="7.6" width="5" height="3.8" rx="0.8" fill="none" stroke="#333" stroke-width="1.1"/><rect x="30.5" y="13.5" width="5" height="3.8" rx="0.8" fill="none" stroke="#333" stroke-width="1.1"/><rect x="30.5" y="19.5" width="5" height="3.8" rx="0.8" fill="none" stroke="#333" stroke-width="1.1"/>
<rect x="10.4" y="29.6" width="5.8" height="6.8" fill="#e4502d" stroke="#222" stroke-width="0.7"/>
<rect x="26.5" y="29.6" width="4.6" height="6.8" fill="#e4502d" stroke="#222" stroke-width="0.7"/>
</svg>
<svg style="left:15px;top:428px" width="45" height="42" viewBox="0 0 45 42">
<path d="M11.3 11.3 L28.5 4.8 L31.6 8.4 V29.5 L15.3 35.2 L11.3 31 Z" fill="#fff" stroke="#333" stroke-width="1.1" stroke-linejoin="round"/>
<path d="M11.3 11.3 L15.3 13.8 L31.6 8.4 M15.3 13.8 V35.2" fill="none" stroke="#333" stroke-width="1.1"/>
<path d="M13 12.2 L29.5 6 M14 13 L30.5 7" fill="none" stroke="#888" stroke-width="0.6"/>
<path d="M18.2 18.2 L22 16.6 L26.3 15.9 L29.5 18.6 V25.2 L24 27.8 L18.2 25.2 Z" fill="#fff" stroke="#333" stroke-width="1"/>
<path d="M22 16.6 L24 19.8 L29.5 18.6 L26.3 15.9 Z" fill="#e4502d"/>
<path d="M22 16.6 L24 19.8 V27.8 M24 19.8 L29.5 18.6" fill="none" stroke="#333" stroke-width="0.9"/>
<path d="M26 26.5 V22.5 L28 22 V25.8" fill="none" stroke="#333" stroke-width="0.9"/>
<rect x="20" y="21.5" width="1.6" height="1.4" fill="#333"/>
</svg>
<svg style="left:15px;top:478px" width="45" height="42" viewBox="0 0 45 42">
<path d="M10.9 8.4 H13 V34.6 H32.5 V36.4 H10.9 Z" fill="#aaa" stroke="#333" stroke-width="1.1" stroke-linejoin="round"/>
<path d="M13.2 6.5 H15.5 V32.3 H34.6 V34.6 H13.2 Z" fill="#ddd" stroke="#333" stroke-width="1.1" stroke-linejoin="round"/>
<path d="M15.5 5.4 H29.5 L36.4 12.1 V32.3 H15.5 Z" fill="#fff" stroke="#333" stroke-width="1.2" stroke-linejoin="round"/>
<path d="M29.5 5.4 V12.3 H36.4" fill="none" stroke="#333" stroke-width="1.1"/>
<rect x="19" y="15.2" width="12.7" height="7.3" rx="1" fill="none" stroke="#ea7a62" stroke-width="1"/>
<path d="M19.3 25.6 H31.2 M19.3 28.5 H31.2" stroke="#ea7a62" stroke-width="1" stroke-linecap="round"/>
</svg>
<svg style="left:16px;top:862px" width="45" height="140" viewBox="0 0 45 140">
<circle cx="20.9" cy="19.8" r="15.8" fill="none" stroke="#333" stroke-width="1.2"/>
<path d="M15.6 17.2 C15.6 13.6 18 11.6 21 11.6 C24.4 11.6 26.6 13.8 26.6 16.6 C26.6 19.6 24 20.6 22.3 21.8 C21 22.8 20.7 23.8 20.7 25.6" fill="none" stroke="#e4502d" stroke-width="2.4"/>
<rect x="19.3" y="27.3" width="2.8" height="2.6" fill="#e4502d"/>
</svg>
<svg style="left:16px;top:862px" width="45" height="140" viewBox="0 0 45 140">
<path d="M17.09 57.28 L17.07 53.96 L24.73 53.96 L24.71 57.28 L29.67 60.14 L32.53 58.47 L36.36 65.10 L33.48 66.74 L33.48 72.46 L36.36 74.10 L32.53 80.73 L29.67 79.06 L24.71 81.92 L24.73 85.24 L17.07 85.24 L17.09 81.92 L12.13 79.06 L9.27 80.73 L5.44 74.10 L8.32 72.46 L8.32 66.74 L5.44 65.10 L9.27 58.47 L12.13 60.14 Z" fill="#fff" stroke="#444" stroke-width="1.1" stroke-linejoin="round"/>
<circle cx="20.6" cy="70" r="6.6" fill="none" stroke="#ea7a62" stroke-width="1.1"/>
<path d="M7.5 108.5 L19 120 L7.5 131.5 M19.2 108.5 L30.7 120 L19.2 131.5" fill="none" stroke="#333" stroke-width="1.3"/>
</svg>
</body></html>
